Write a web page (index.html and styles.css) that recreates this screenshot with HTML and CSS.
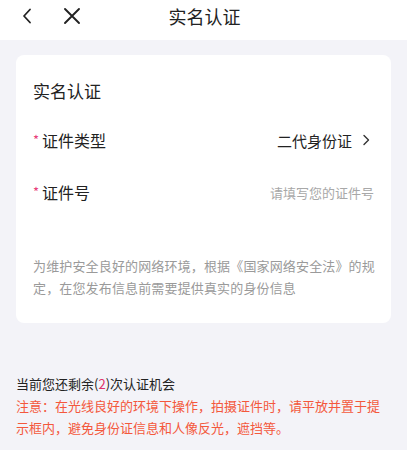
FILE: index.html
```html
<!DOCTYPE html>
<html lang="zh-CN">
<head>
<meta charset="utf-8">
<link rel="stylesheet" href="styles.css">
</head>
<body>
<header class="nav">
  <div class="nav-left">
    <svg class="icon-back" width="12" height="16" viewBox="0 0 12 16"><path d="M9 1.5 L3 8 L9 14.5" fill="none" stroke="#222" stroke-width="1.8" stroke-linecap="round" stroke-linejoin="round"/></svg>
    <svg class="icon-close" width="18" height="18" viewBox="0 0 18 18"><path d="M2 2 L16 16 M16 2 L2 16" fill="none" stroke="#222" stroke-width="1.9" stroke-linecap="round"/></svg>
  </div>
  <div class="nav-title">实名认证</div>
</header>
<main class="page">
  <section class="card">
    <h2 class="card-title">实名认证</h2>
    <div class="row">
      <div class="label"><span class="req">*</span>证件类型</div>
      <div class="value">二代身份证
        <svg class="chev" width="8" height="12" viewBox="0 0 8 12"><path d="M2 1.5 L6.5 6 L2 10.5" fill="none" stroke="#333" stroke-width="1.4" stroke-linecap="round" stroke-linejoin="round"/></svg>
      </div>
    </div>
    <div class="row">
      <div class="label"><span class="req">*</span>证件号</div>
      <div class="placeholder">请填写您的证件号</div>
    </div>
    <p class="notice">为维护安全良好的网络环境，根据《国家网络安全法》的规定，在您发布信息前需要提供真实的身份信息</p>
  </section>
  <div class="tips">
    <p class="remain">当前您还剩余(<span class="num">2</span>)次认证机会</p>
    <p class="warn">注意：在光线良好的环境下操作，拍摄证件时，请平放并置于提示框内，避免身份证信息和人像反光，遮挡等。</p>
  </div>
</main>
</body>
</html>
```

FILE: styles.css
```css
* { box-sizing: border-box; margin: 0; padding: 0; }
html, body { height: 100%; }
body {
  font-family: "Noto Sans CJK SC", "Noto Sans", sans-serif;
  background: #f3f3f8;
  color: #222;
  width: 407px;
}
.nav {
  position: relative;
  height: 40px;
  background: #fff;
  display: flex;
  align-items: center;
  justify-content: center;
}
.nav-left {
  position: absolute;
  left: 0;
  top: 0;
  height: 32px;
  display: flex;
  align-items: center;
}
.icon-back { margin-left: 21px; }
.icon-close { margin-left: 30px; }
.nav-title {
  font-size: 18px;
  line-height: 32px;
  align-self: flex-start;
  color: #222;
  margin-left: 2px;
}
.page { padding: 15px 16px 0; }
.card {
  background: #fff;
  border-radius: 8px;
  padding: 22px 17px 26px;
  height: 268px;
}
.card-title {
  font-size: 17px;
  font-weight: normal;
  line-height: 28px;
  color: #222;
}
.row {
  display: flex;
  align-items: center;
  justify-content: space-between;
  height: 52px;
}
.row:first-of-type { margin-top: 9px; }
.label { font-size: 16px; color: #222; display: flex; align-items: center; }
.req { color: #e8407a; font-size: 13px; margin-right: 3px; margin-top: -2px; }
.value { font-size: 15px; color: #222; display: flex; align-items: center; margin-right: 4px; }
.chev { margin-left: 10px; }
.placeholder { font-size: 13px; color: #a8a8a8; }
.notice {
  margin-top: 37px;
  margin-right: -2px;
  font-size: 13px;
  line-height: 22px;
  color: #9a9a9a;
  letter-spacing: 0.15px;
}
.tips { padding-top: 50px; }
.remain { font-size: 13px; line-height: 22px; color: #222; }
.num { color: #e0306a; }
.warn { font-size: 13px; line-height: 22px; color: #f4583c; }
```
